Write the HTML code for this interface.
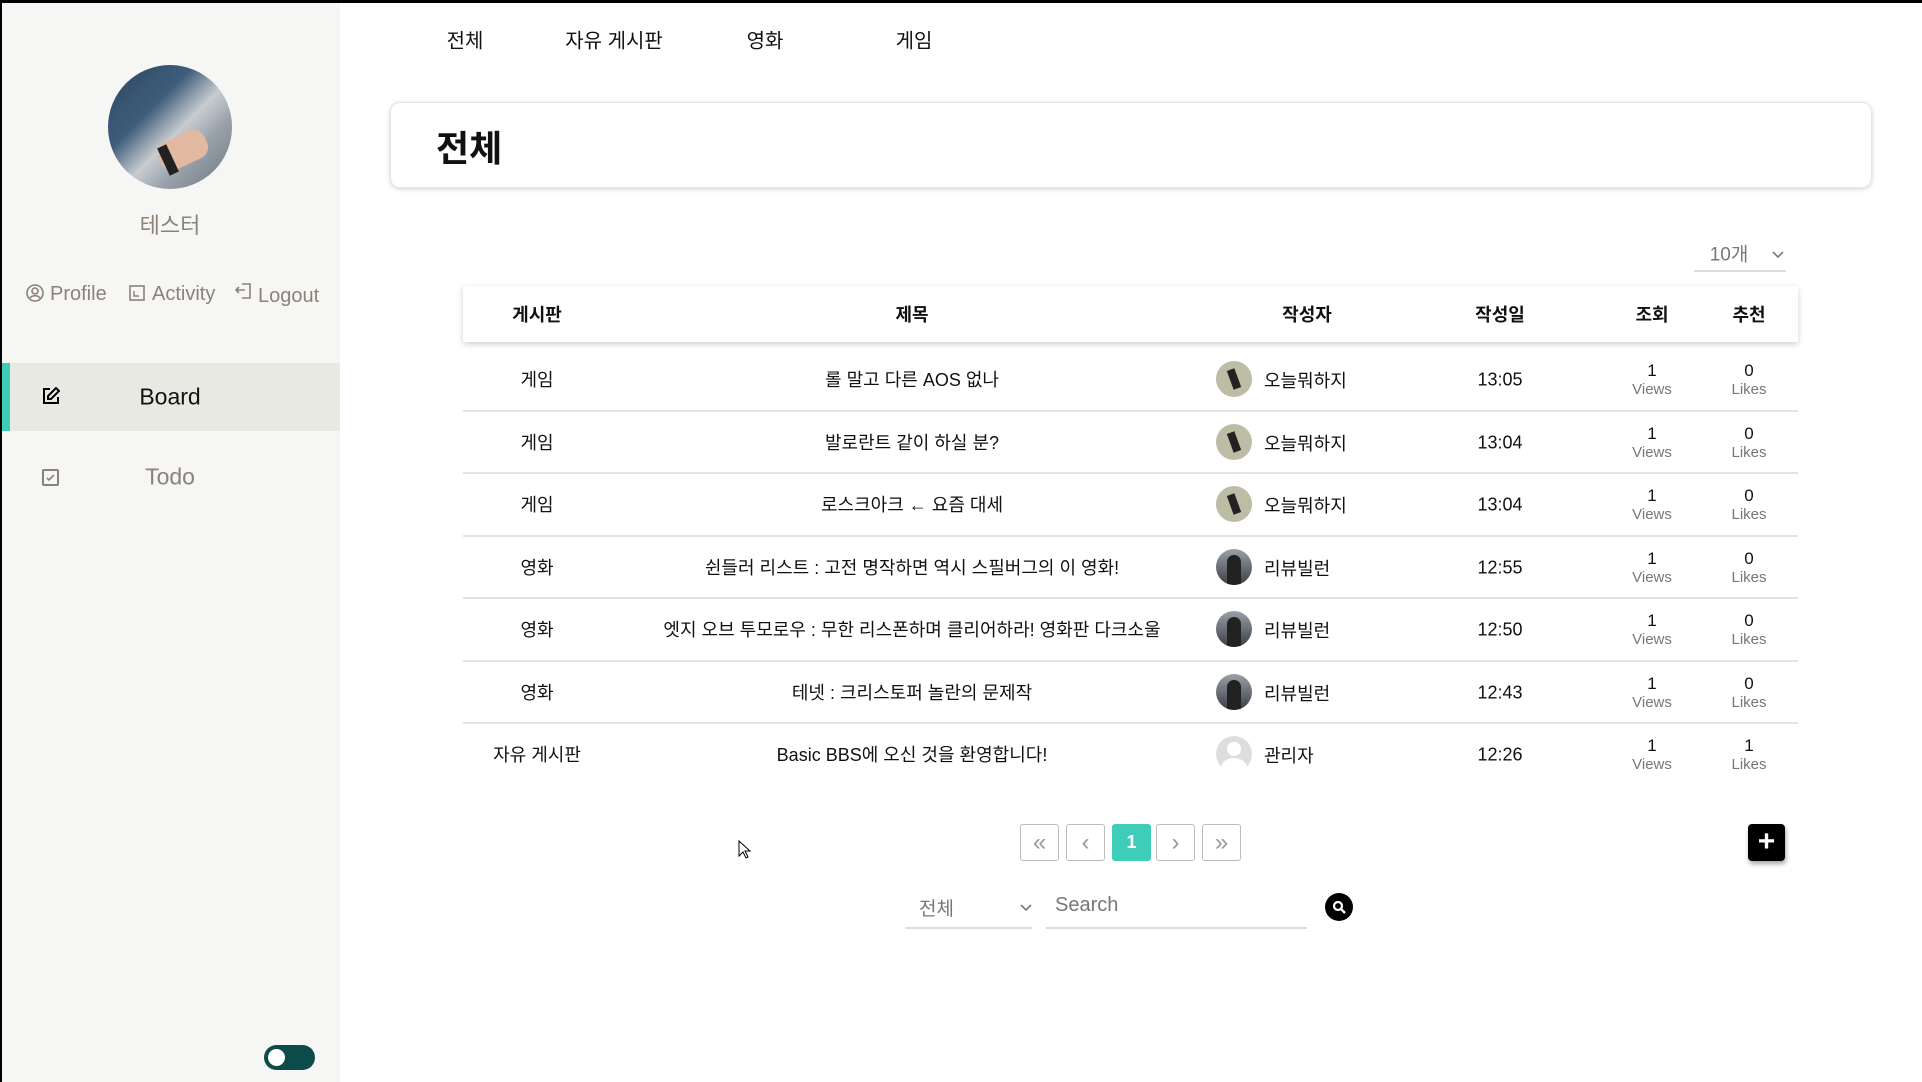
<!DOCTYPE html>
<html><head><meta charset="utf-8"><style>
*{margin:0;padding:0;box-sizing:border-box}
body{width:1922px;height:1082px;position:relative;overflow:hidden;background:#fff;font-family:"Liberation Sans","Noto Sans CJK KR",sans-serif;color:#111}
.a{position:absolute}
.c{position:absolute;transform:translate(-50%,-50%);white-space:nowrap}
#side{left:0;top:0;width:340px;height:1082px;background:#f6f6f4}
.nav{font-size:20px;top:39px}
.th{font-weight:bold;font-size:18px;top:314px}
.td{font-size:18px}
.sm{font-size:17px;line-height:19px;text-align:center}
.sm span{display:block;color:#777;font-size:15px}
.line{left:463px;width:1335px;height:2px;background:#e2e2e2}
.pg{top:824px;width:39px;height:37px;border:1px solid #bbb;border-radius:3px;color:#999;font-size:24px;display:flex;align-items:center;justify-content:center}
.av{width:36px;height:36px;border-radius:50%;overflow:hidden}
.ln{font-size:20px;color:#8d8278;top:283px}
</style></head><body>
<div class="a" style="left:0;top:0;width:1922px;height:3px;background:#000;z-index:5"></div>
<div class="a" style="left:0;top:0;width:2px;height:1082px;background:#000;z-index:5"></div>
<div id="side" class="a"></div>
<div class="a" style="left:108px;top:65px;width:124px;height:124px;border-radius:50%;overflow:hidden;background:linear-gradient(135deg,#2d4660 0%,#3e5d7a 35%,#c8ccd0 55%,#9aa3ab 70%,#6b7580 100%)">
<div class="a" style="left:50px;top:70px;width:50px;height:30px;background:#e0b9a0;border-radius:12px;transform:rotate(-25deg)"></div>
<div class="a" style="left:55px;top:80px;width:10px;height:30px;background:#222;transform:rotate(-25deg)"></div>
</div>
<div class="c" style="left:170px;top:224px;font-size:22px;color:#8d8278">테스터</div>
<svg class="a" style="left:26px;top:284px" width="18" height="18" viewBox="0 0 18 18"><circle cx="9" cy="9" r="8" fill="none" stroke="#8d8278" stroke-width="1.6"/><circle cx="9" cy="7" r="3" fill="none" stroke="#8d8278" stroke-width="1.6"/><path d="M4 14c2-3 8-3 10 0" fill="none" stroke="#8d8278" stroke-width="1.6"/></svg>
<div class="a ln" style="left:50px">Profile</div>
<svg class="a" style="left:129px;top:285px" width="16" height="16" viewBox="0 0 16 16"><rect x="1" y="1" width="14" height="14" fill="none" stroke="#8d8278" stroke-width="1.6"/><path d="M5 6v5h5" fill="none" stroke="#8d8278" stroke-width="1.4"/></svg>
<div class="a ln" style="left:152px">Activity</div>
<svg class="a" style="left:235px;top:283px" width="17" height="17" viewBox="0 0 17 17"><path d="M7 1h8v14H7" fill="none" stroke="#8d8278" stroke-width="1.6"/><path d="M1 7h9M4 4L1 7l3 3" fill="none" stroke="#8d8278" stroke-width="1.6"/></svg>
<div class="a ln" style="left:258px;top:285px">Logout</div>
<div class="a" style="left:2px;top:363px;width:338px;height:68px;background:#e9e9e4"></div>
<div class="a" style="left:2px;top:363px;width:8px;height:68px;background:#3ecdb4"></div>
<svg class="a" style="left:42px;top:387px" width="18" height="18" viewBox="0 0 18 18"><path d="M8 2H2v14h14v-6" fill="none" stroke="#000" stroke-width="2"/><path d="M14 1l3 3-8 8H6V9z" fill="none" stroke="#000" stroke-width="2"/></svg>
<div class="c" style="left:170px;top:397px;font-size:23px;color:#111">Board</div>
<svg class="a" style="left:42px;top:469px" width="17" height="17" viewBox="0 0 17 17"><rect x="1" y="1" width="15" height="15" rx="1" fill="none" stroke="#8d8278" stroke-width="2"/><path d="M5 9l2 2 5-5" fill="none" stroke="#8d8278" stroke-width="1.6"/></svg>
<div class="c" style="left:170px;top:477px;font-size:23px;color:#8d8278">Todo</div>
<div class="a" style="left:264px;top:1045px;width:51px;height:25px;border-radius:13px;background:#0d4a4a"></div>
<div class="a" style="left:268px;top:1049px;width:17px;height:17px;border-radius:50%;background:#fff"></div>

<div class="c nav" style="left:465px">전체</div>
<div class="c nav" style="left:614px">자유 게시판</div>
<div class="c nav" style="left:765px">영화</div>
<div class="c nav" style="left:914px">게임</div>

<div class="a" style="left:390px;top:102px;width:1482px;height:86px;border-radius:10px;border:1px solid #e6e6e6;box-shadow:0 1px 5px rgba(0,0,0,.18)"></div>
<div class="a" style="left:436px;top:120px;font-size:36px;font-weight:bold">전체</div>

<div class="c" style="left:1729px;top:253px;font-size:19px;color:#777">10개</div>
<svg class="a" style="left:1772px;top:251px" width="12" height="8" viewBox="0 0 12 8"><path d="M1 1l5 5 5-5" fill="none" stroke="#777" stroke-width="1.6"/></svg>
<div class="a" style="left:1694px;top:270px;width:92px;height:2px;background:#ddd"></div>

<div class="a" style="left:463px;top:286px;width:1335px;height:56px;box-shadow:0 2px 6px rgba(0,0,0,.2);background:#fff"></div>
<div class="c th" style="left:537px">게시판</div>
<div class="c th" style="left:912px">제목</div>
<div class="c th" style="left:1307px">작성자</div>
<div class="c th" style="left:1500px">작성일</div>
<div class="c th" style="left:1652px">조회</div>
<div class="c th" style="left:1749px">추천</div>

<div class="a line" style="top:410px"></div>
<div class="a line" style="top:472px"></div>
<div class="a line" style="top:535px"></div>
<div class="a line" style="top:597px"></div>
<div class="a line" style="top:660px"></div>
<div class="a line" style="top:722px"></div>

<div class="c td" style="left:537px;top:379px">게임</div><div class="c td" style="left:912px;top:379px">롤 말고 다른 AOS 없나</div>
<div class="a av" style="left:1216px;top:361px;background:#bdbca5"><div class="a" style="left:14px;top:8px;width:8px;height:20px;background:#222;transform:rotate(-20deg)"></div></div><div class="a td" style="left:1264px;top:367px">오늘뭐하지</div>
<div class="c td" style="left:1500px;top:380px">13:05</div>
<div class="c sm" style="left:1652px;top:380px">1<span>Views</span></div><div class="c sm" style="left:1749px;top:380px">0<span>Likes</span></div>

<div class="c td" style="left:537px;top:442px">게임</div><div class="c td" style="left:912px;top:442px">발로란트 같이 하실 분?</div>
<div class="a av" style="left:1216px;top:424px;background:#bdbca5"><div class="a" style="left:14px;top:8px;width:8px;height:20px;background:#222;transform:rotate(-20deg)"></div></div><div class="a td" style="left:1264px;top:430px">오늘뭐하지</div>
<div class="c td" style="left:1500px;top:443px">13:04</div>
<div class="c sm" style="left:1652px;top:443px">1<span>Views</span></div><div class="c sm" style="left:1749px;top:443px">0<span>Likes</span></div>

<div class="c td" style="left:537px;top:504px">게임</div><div class="c td" style="left:912px;top:504px">로스크아크 ← 요즘 대세</div>
<div class="a av" style="left:1216px;top:486px;background:#bdbca5"><div class="a" style="left:14px;top:8px;width:8px;height:20px;background:#222;transform:rotate(-20deg)"></div></div><div class="a td" style="left:1264px;top:492px">오늘뭐하지</div>
<div class="c td" style="left:1500px;top:505px">13:04</div>
<div class="c sm" style="left:1652px;top:505px">1<span>Views</span></div><div class="c sm" style="left:1749px;top:505px">0<span>Likes</span></div>

<div class="c td" style="left:537px;top:567px">영화</div><div class="c td" style="left:912px;top:567px">쉰들러 리스트 : 고전 명작하면 역시 스필버그의 이 영화!</div>
<div class="a av" style="left:1216px;top:549px;background:linear-gradient(#9aa0a8,#3a3f45)"><div class="a" style="left:11px;top:6px;width:14px;height:30px;background:#222;border-radius:7px 7px 0 0"></div></div><div class="a td" style="left:1264px;top:555px">리뷰빌런</div>
<div class="c td" style="left:1500px;top:568px">12:55</div>
<div class="c sm" style="left:1652px;top:568px">1<span>Views</span></div><div class="c sm" style="left:1749px;top:568px">0<span>Likes</span></div>

<div class="c td" style="left:537px;top:629px">영화</div><div class="c td" style="left:912px;top:629px">엣지 오브 투모로우 : 무한 리스폰하며 클리어하라! 영화판 다크소울</div>
<div class="a av" style="left:1216px;top:611px;background:linear-gradient(#9aa0a8,#3a3f45)"><div class="a" style="left:11px;top:6px;width:14px;height:30px;background:#222;border-radius:7px 7px 0 0"></div></div><div class="a td" style="left:1264px;top:617px">리뷰빌런</div>
<div class="c td" style="left:1500px;top:630px">12:50</div>
<div class="c sm" style="left:1652px;top:630px">1<span>Views</span></div><div class="c sm" style="left:1749px;top:630px">0<span>Likes</span></div>

<div class="c td" style="left:537px;top:692px">영화</div><div class="c td" style="left:912px;top:692px">테넷 : 크리스토퍼 놀란의 문제작</div>
<div class="a av" style="left:1216px;top:674px;background:linear-gradient(#9aa0a8,#3a3f45)"><div class="a" style="left:11px;top:6px;width:14px;height:30px;background:#222;border-radius:7px 7px 0 0"></div></div><div class="a td" style="left:1264px;top:680px">리뷰빌런</div>
<div class="c td" style="left:1500px;top:693px">12:43</div>
<div class="c sm" style="left:1652px;top:693px">1<span>Views</span></div><div class="c sm" style="left:1749px;top:693px">0<span>Likes</span></div>

<div class="c td" style="left:537px;top:754px">자유 게시판</div><div class="c td" style="left:912px;top:754px">Basic BBS에 오신 것을 환영합니다!</div>
<div class="a av" style="left:1216px;top:736px;background:#ddd"><div class="a" style="left:11px;top:6px;width:14px;height:14px;border-radius:50%;background:#fff"></div><div class="a" style="left:5px;top:22px;width:26px;height:20px;border-radius:50%;background:#fff"></div></div><div class="a td" style="left:1264px;top:742px">관리자</div>
<div class="c td" style="left:1500px;top:755px">12:26</div>
<div class="c sm" style="left:1652px;top:755px">1<span>Views</span></div><div class="c sm" style="left:1749px;top:755px">1<span>Likes</span></div>

<div class="a pg" style="left:1020px">«</div>
<div class="a pg" style="left:1066px">‹</div>
<div class="a pg" style="left:1112px;background:#3ecdb9;border-color:#3ecdb9;color:#fff;font-weight:bold;font-size:18px">1</div>
<div class="a pg" style="left:1156px">›</div>
<div class="a pg" style="left:1202px">»</div>
<div class="a" style="left:1748px;top:824px;width:37px;height:37px;border-radius:4px;background:#000;box-shadow:1px 3px 5px rgba(0,0,0,.35);color:#fff;font-size:30px;line-height:36px;text-align:center;font-weight:bold">+</div>

<div class="a" style="left:919px;top:894px;font-size:19px;color:#777">전체</div>
<svg class="a" style="left:1020px;top:904px" width="12" height="8" viewBox="0 0 12 8"><path d="M1 1l5 5 5-5" fill="none" stroke="#777" stroke-width="1.6"/></svg>
<div class="a" style="left:905px;top:927px;width:127px;height:2px;background:#ddd"></div>
<div class="a" style="left:1055px;top:894px;font-size:20px;color:#777">Search</div>
<div class="a" style="left:1046px;top:927px;width:261px;height:2px;background:#ddd"></div>
<div class="a" style="left:1325px;top:893px;width:28px;height:28px;border-radius:50%;background:#000"></div>
<svg class="a" style="left:1331px;top:899px" width="16" height="16" viewBox="0 0 16 16"><circle cx="7" cy="7" r="4" fill="none" stroke="#fff" stroke-width="2.2"/><path d="M10 10l4 4" stroke="#fff" stroke-width="2.4"/></svg>
<svg class="a" style="left:738px;top:840px" width="14" height="20" viewBox="0 0 14 20"><path d="M1 1v15l4-4 3 6 2-1-3-6h5z" fill="#fff" stroke="#000" stroke-width="1"/></svg>
</body></html>
